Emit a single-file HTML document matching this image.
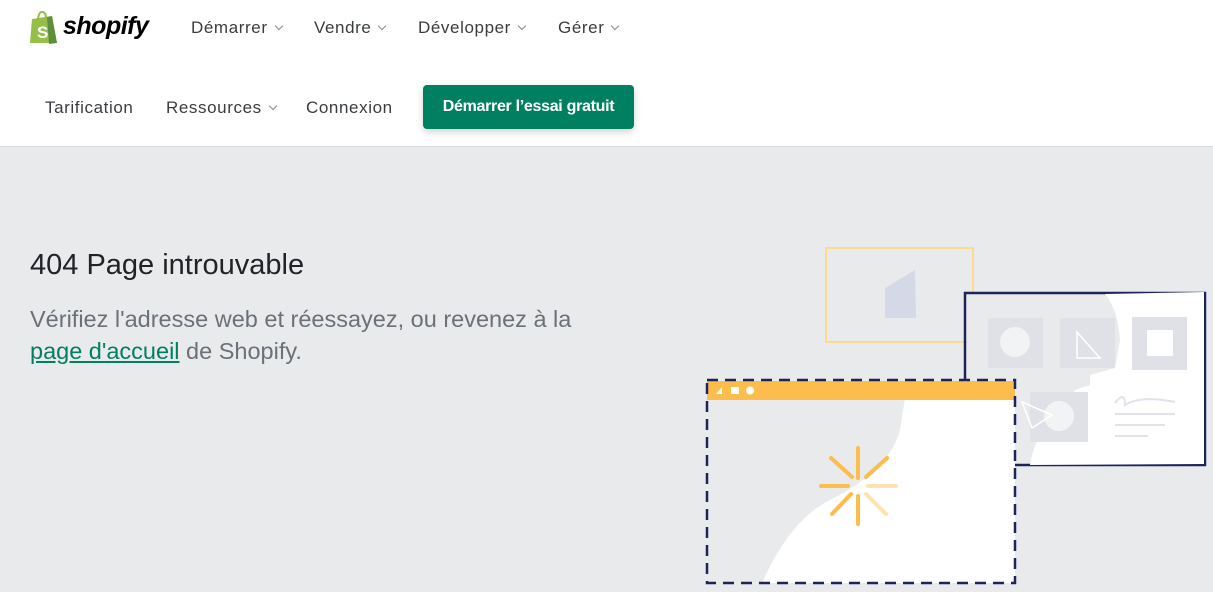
<!DOCTYPE html>
<html><head><meta charset="utf-8"><style>
*{margin:0;padding:0;box-sizing:border-box}
body{width:1213px;height:592px;overflow:hidden;background:#e9eaec;font-family:"Liberation Sans",sans-serif;position:relative}
.hdr{position:absolute;left:0;top:0;width:1213px;height:147px;background:#fff;border-bottom:1px solid #d9dadc}
.nav{position:absolute;font-size:17px;color:#3a3d40;letter-spacing:.6px}
.chev{display:inline-block;width:6px;height:6px;border-right:1.5px solid #888;border-bottom:1.5px solid #888;transform:rotate(45deg);margin-left:8px;position:relative;top:-4px}
.btn{position:absolute;left:423px;top:85px;width:211px;height:44px;background:#008060;border-radius:4px;color:#fff;font-weight:bold;font-size:16px;text-align:center;line-height:44px;box-shadow:0 3px 8px rgba(0,0,0,.18);letter-spacing:-.3px}
h1{position:absolute;left:30px;top:249px;font-weight:normal;font-size:29px;color:#212326}
p{position:absolute;left:30px;top:303px;font-size:23.5px;line-height:32px;color:#6b7177;width:565px}
a{color:#008060;text-decoration:underline}
</style></head><body>
<div class="hdr">
<svg style="position:absolute;left:28px;top:10px" width="32" height="34" viewBox="0 0 32 34"><path d="M4 9 L24 6 L29 33 L2 33 Z" fill="#95bf47"/><path d="M24 6 L29 33 L21 34 L19 7Z" fill="#5e8e3e"/><path d="M10 9 Q11 1 15 2 Q18 3 18 8" fill="none" stroke="#95bf47" stroke-width="2"/><text x="9" y="28" font-family="Liberation Sans" font-weight="bold" font-size="17" fill="#fff">S</text></svg>
<div style="position:absolute;left:63px;top:12px;font-size:25px;font-weight:bold;font-style:italic;color:#000;letter-spacing:-.5px">shopify</div>
<div class="nav" style="left:191px;top:18px">Démarrer<span class="chev"></span></div>
<div class="nav" style="left:314px;top:18px">Vendre<span class="chev"></span></div>
<div class="nav" style="left:418px;top:18px">Développer<span class="chev"></span></div>
<div class="nav" style="left:558px;top:18px">Gérer<span class="chev"></span></div>
<div class="nav" style="left:45px;top:98px">Tarification</div>
<div class="nav" style="left:166px;top:98px">Ressources<span class="chev"></span></div>
<div class="nav" style="left:306px;top:98px">Connexion</div>
<div class="btn">Démarrer l’essai gratuit</div>
</div>
<h1>404 Page introuvable</h1>
<p>Vérifiez l'adresse web et réessayez, ou revenez à la <a>page d'accueil</a> de Shopify.</p>
<svg style="position:absolute;left:0;top:0" width="1213" height="592" viewBox="0 0 1213 592">
<rect x="826" y="248" width="147" height="94" fill="none" stroke="#fdd991" stroke-width="2"/>
<path d="M885 288 L915 270 L916 318 L885 318Z" fill="#d5d9e7"/>
<rect x="965" y="293" width="240" height="172" fill="#e9eaec" stroke="#1d2458" stroke-width="2.5"/>
<path d="M1105 294 L1204 292 L1204 464 L1030 465 Q1034 440 1050 420 L1075 390 L1090 385 L1090 375 L1115 368 L1120 340 Q1118 310 1105 294Z" fill="#fff"/>
<rect x="988" y="318" width="55" height="50" fill="#dfe1e6"/>
<circle cx="1015" cy="342" r="15" fill="#f2f3f5"/>
<rect x="1060" y="318" width="55" height="50" fill="#dfe1e6"/>
<path d="M1077 332 L1100 358 L1077 358Z" fill="none" stroke="#fff" stroke-width="1.5"/>
<rect x="1132" y="317" width="55" height="53" fill="#dfe1e6"/>
<rect x="1147" y="330" width="26" height="26" fill="#fff"/>
<rect x="1030" y="392" width="58" height="50" fill="#dfe1e6"/>
<circle cx="1059" cy="416" r="15" fill="#f2f3f5"/>
<path d="M1022 402 L1052 415 L1032 428Z" fill="none" stroke="#fff" stroke-width="1.5"/>
<path d="M1115 403 Q1125 390 1125 405 Q1140 395 1175 402 M1115 414 L1175 414 M1115 425 L1165 425 M1115 436 L1148 436" fill="none" stroke="#e1e3e9" stroke-width="2"/>
<rect x="707" y="380" width="308" height="203" fill="#e9eaec"/>
<path d="M905 398 L1015 398 L1015 583 L762 583 Q790 520 830 500 Q890 470 900 430 Z" fill="#fff"/>
<rect x="707" y="381" width="308" height="19" fill="#fdbd4d"/>
<path d="M716 394 L722 387 L722 394Z" fill="#fff"/><rect x="731" y="387" width="8" height="7" fill="#fff"/><circle cx="750" cy="390.5" r="4" fill="#fff"/>
<rect x="707" y="380" width="308" height="203" fill="none" stroke="#1d2458" stroke-width="2.5" stroke-dasharray="11 7"/>
<g stroke="#fdbd4d" stroke-width="4" stroke-linecap="round">
<path d="M858 448 L858 478 M858 496 L858 524 M821 486 L848 486 M831 458 L852 477 M887 458 L866 477 M832 514 L851 494"/>
<path d="M868 486 L896 486 M866 494 L886 514" stroke="#fde3b0"/>
</g>
</svg>
</body></html>
